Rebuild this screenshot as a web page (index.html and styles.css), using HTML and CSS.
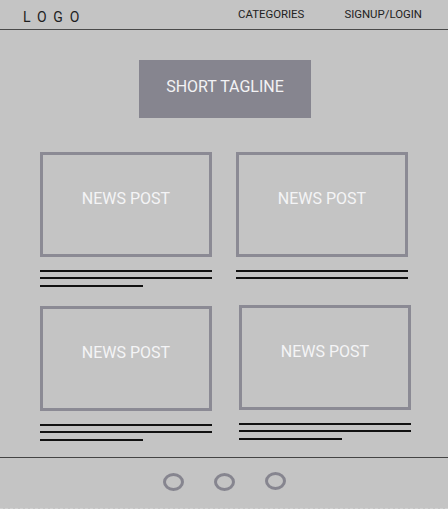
FILE: index.html
```html
<!DOCTYPE html>
<html lang="en">
<head>
<meta charset="utf-8">
<title>News</title>
<link rel="stylesheet" href="styles.css">
</head>
<body>
  <header class="topbar">
    <div class="logo">LOGO</div>
    <nav class="nav">
      <a class="nav-link" href="#">CATEGORIES</a>
      <a class="nav-link" href="#">SIGNUP/LOGIN</a>
    </nav>
  </header>
  <main class="content">
    <div class="tagline">SHORT TAGLINE</div>
    <section class="grid">
      <article class="post">
        <div class="thumb">NEWS POST</div>
        <div class="lines">
          <span class="line"></span>
          <span class="line"></span>
          <span class="line line-short"></span>
        </div>
      </article>
      <article class="post">
        <div class="thumb">NEWS POST</div>
        <div class="lines">
          <span class="line"></span>
          <span class="line"></span>
        </div>
      </article>
      <article class="post">
        <div class="thumb">NEWS POST</div>
        <div class="lines">
          <span class="line"></span>
          <span class="line"></span>
          <span class="line line-short"></span>
        </div>
      </article>
      <article class="post post-shifted">
        <div class="thumb">NEWS POST</div>
        <div class="lines">
          <span class="line"></span>
          <span class="line"></span>
          <span class="line line-short"></span>
        </div>
      </article>
    </section>
  </main>
  <footer class="footer">
    <span class="dot"></span>
    <span class="dot"></span>
    <span class="dot dot-raised"></span>
  </footer>
</body>
</html>
```
FILE: styles.css
```css
* {
  box-sizing: border-box;
}

html, body {
  margin: 0;
  padding: 0;
}

body {
  width: 448px;
  height: 509px;
  overflow: hidden;
  background: #c4c4c4;
  font-family: Roboto, "Liberation Sans", sans-serif;
  display: flex;
  flex-direction: column;
}

.topbar {
  height: 30px;
  border-bottom: 1px solid #4a4a4a;
  display: flex;
  align-items: flex-start;
  justify-content: space-between;
  padding: 0 26px 0 23px;
}

.logo {
  margin-top: 10px;
  font-size: 14px;
  line-height: 14px;
  letter-spacing: 6.8px;
  color: #1e1e1e;
}

.nav {
  margin-top: 8px;
  display: flex;
  gap: 40px;
}

.nav-link {
  font-size: 11.4px;
  line-height: 12px;
  color: #222;
  text-decoration: none;
}

.content {
  flex: 1;
  display: flex;
  flex-direction: column;
  align-items: center;
}

.tagline {
  margin-top: 30px;
  margin-left: 2px;
  width: 172px;
  height: 58px;
  background: #86858f;
  color: #f2f2f4;
  font-size: 16px;
  line-height: 16px;
  display: flex;
  align-items: center;
  justify-content: center;
  padding-bottom: 5px;
}

.grid {
  margin-top: 34px;
  display: grid;
  grid-template-columns: 172px 172px;
  column-gap: 24px;
  row-gap: 19px;
}

.post {
  display: flex;
  flex-direction: column;
  width: 172px;
}

.post-shifted {
  margin-left: 3px;
  margin-top: -1px;
}

.thumb {
  height: 105px;
  border: 3px solid #8b8a94;
  display: flex;
  align-items: center;
  justify-content: center;
  padding-bottom: 11px;
  color: #f4f4f6;
  font-size: 16px;
  line-height: 16px;
}

.lines {
  margin-top: 13px;
  display: flex;
  flex-direction: column;
}

.line {
  display: block;
  height: 2px;
  background: #111;
  margin-top: 5px;
}

.line:first-child {
  margin-top: 0;
}

.line-short {
  width: 103px;
  margin-top: 6px;
}

.footer {
  height: 52px;
  flex-shrink: 0;
  border-top: 1px solid #444;
  border-bottom: 1px dashed #d2d2d2;
  display: flex;
  align-items: center;
  justify-content: center;
  gap: 30px;
  padding-bottom: 2px;
}

.dot {
  width: 21px;
  height: 18px;
  border: 3px solid #86858f;
  border-radius: 50%;
}

.dot-raised {
  margin-bottom: 2px;
}
```
